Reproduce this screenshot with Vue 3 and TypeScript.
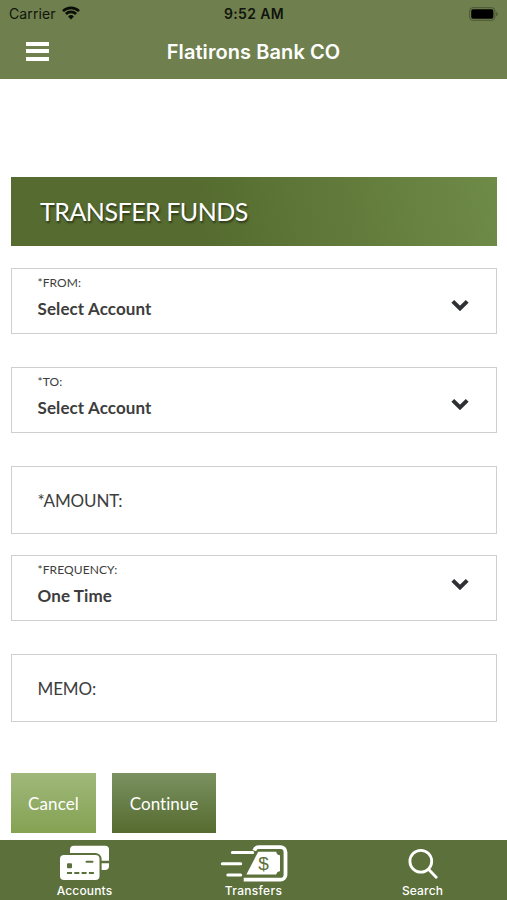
<script setup lang="ts">
interface Field {
  id: string
  label: string
  value?: string
}

const fields: Field[] = [
  { id: 'from', label: '*FROM:', value: 'Select Account' },
  { id: 'to', label: '*TO:', value: 'Select Account' },
  { id: 'amount', label: '*AMOUNT:' },
  { id: 'frequency', label: '*FREQUENCY:', value: 'One Time' },
  { id: 'memo', label: 'MEMO:' },
]
</script>

<template>
  <div class="screen">
    <header class="top">
      <div class="status">
        <div class="carrier">
          <span>Carrier</span>
          <svg class="wifi" viewBox="0 0 18 14" width="18" height="14">
            <path d="M1 5.1a11.4 11.4 0 0 1 16 0" />
            <path d="M3.9 8a7.3 7.3 0 0 1 10.2 0" />
            <path class="dot" d="M9 13.4 6.1 10.4a4.2 4.2 0 0 1 5.8 0Z" />
          </svg>
        </div>
        <span class="clock">9:52 AM</span>
        <svg class="battery" viewBox="0 0 30 14" width="30" height="14">
          <rect class="shell" x=".7" y=".7" width="25.2" height="12.6" rx="3.2" />
          <rect class="charge" x="2.2" y="2.2" width="22.2" height="9.6" rx="1.8" />
          <path class="cap" d="M27.2 4.7c2 .6 2 4 0 4.6Z" />
        </svg>
      </div>
      <div class="nav">
        <button class="menu" aria-label="Menu"><i></i><i></i><i></i></button>
        <div class="bank">Flatirons Bank CO</div>
      </div>
    </header>

    <main class="content">
      <h1 class="heading"><span>TRANSFER FUNDS</span></h1>
      <div v-for="f in fields" :key="f.id" class="field" :class="[f.id, { select: f.value }]">
        <div class="texts">
          <span class="label">{{ f.label }}</span>
          <span v-if="f.value" class="value">{{ f.value }}</span>
        </div>
        <svg v-if="f.value" class="chevron" viewBox="0 0 18 12" width="18" height="12">
          <path d="M1.8 2.300 9 9.400 16.2 2.300" />
        </svg>
      </div>
      <div class="actions">
        <button class="btn cancel">Cancel</button>
        <button class="btn continue">Continue</button>
      </div>
    </main>

    <nav class="tabs">
      <a class="tab">
        <svg viewBox="0.5 0 50 36" width="50" height="36">
          <path class="fill" d="M10.500 4.700a4 4 0 0 1 4-4h31a4 4 0 0 1 4 4v11h-7.400v-1.500A6.200 6.200 0 0 0 35.900 8H10.500Z" />
          <path class="fill" d="M42.100 18.300h7.400V21a4 4 0 0 1-4 4h-3.400Z" />
          <rect class="fill" x=".5" y="10" width="39.500" height="25" rx="4" />
          <rect class="hole" x="7.500" y="18.200" width="5" height="5" rx="1" />
          <path class="detail" d="M27 16.700h6" />
          <path class="dash" d="M7.500 28h27" />
        </svg>
        <span class="accounts">Accounts</span>
      </a>
      <a class="tab">
        <svg class="money" viewBox="0.5 0 68 38" width="68" height="38">
          <path class="line" d="M12.800 7.600h20.400M2.800 18.800h18.400M8.300 29.900h12.900" />
          <path class="frame" d="M34.800 5.600c.8-2.300 1.600-3.400 4.200-3.400h22a5 5 0 0 1 5 5v22.500a5 5 0 0 1-5 5H24.200" />
          <path class="fill" d="M38.700 6.700h18.100c.2 2.200 1.500 3.400 3.700 3.600v15.900c-2.200.2-3.500 1.400-3.700 3.300H26.900Z" />
          <text class="dollar" x="44" y="25" text-anchor="middle">$</text>
        </svg>
        <span class="transfers">Transfers</span>
      </a>
      <a class="tab">
        <svg class="search" viewBox="0 0 30 32" width="30" height="32">
          <circle cx="12.800" cy="12.300" r="10.900" />
          <path d="m20.700 20.500 7.500 7.800" />
        </svg>
        <span class="find">Search</span>
      </a>
    </nav>
  </div>
</template>

<style>
body {
  margin: 0;
  background: #fff;
}
</style>

<style scoped>
* {
  box-sizing: border-box;
}
.screen {
  width: 507px;
  height: 900px;
  display: flex;
  flex-direction: column;
  overflow: hidden;
  background: #fff;
  font-family: Lato, sans-serif;
  font-variant-ligatures: none;
}
button {
  border: 0;
  padding: 0;
  font: inherit;
}
.top {
  height: 79px;
  flex: none;
  background: #6f804e;
  font-family: Inter, sans-serif;
}
.status {
  height: 27px;
  padding: 0 8px 0 9px;
  display: grid;
  grid-template-columns: 1fr auto 1fr;
  align-items: center;
  color: #11140c;
  font-size: 14px;
}
.carrier {
  display: flex;
  align-items: center;
  gap: 6px;
  letter-spacing: .1px;
}
.wifi {
  margin-top: -2px;
  fill: none;
  stroke: #0b0e07;
  stroke-width: 2.700;
}
.wifi .dot {
  fill: #0b0e07;
  stroke: none;
}
.clock {
  font-weight: 600;
  letter-spacing: .35px;
}
.battery {
  justify-self: end;
}
.shell {
  fill: none;
  stroke: #4b5636;
  stroke-width: 1;
}
.charge {
  fill: #000;
}
.cap {
  fill: #4b5636;
}
.nav {
  height: 50px;
  display: grid;
  grid-template-columns: 76px 1fr 76px;
  align-items: center;
}
.menu {
  width: 23px;
  margin: -2px 0 0 26px;
  display: grid;
  gap: 3.500px;
  background: none;
}
.menu i {
  height: 4px;
  background: #fff;
}
.bank {
  color: #fff;
  text-align: center;
  font-size: 20px;
  font-weight: 600;
  letter-spacing: .08px;
}
.content {
  flex: 1;
  padding: 98px 10px 0 11px;
}
.heading {
  height: 69px;
  margin: 0 0 22px;
  padding: 0 0 1px 29px;
  display: flex;
  align-items: center;
  background: linear-gradient(80deg, #556b2f 0%, #556b2f 38%, #6f8b48 100%);
  color: #fff;
  font-size: 25px;
  font-weight: 400;
  letter-spacing: -.5px;
  text-shadow: 1px 2px 2px rgba(0, 0, 0, .5);
}
.field {
  height: 68px;
  padding: 2px 27px 0 25.500px;
  display: flex;
  align-items: center;
  justify-content: space-between;
  border: 1px solid #cfcfcf;
  color: #3d3d3d;
}
.field.select {
  height: 66px;
  margin-bottom: 33px;
  padding-top: 0;
  align-items: flex-start;
}
.field.amount {
  margin-bottom: 21px;
}
.texts {
  display: flex;
  flex-direction: column;
}
.label {
  font-size: 17px;
  line-height: 22px;
  letter-spacing: -.15px;
}
.select .label {
  margin-top: 6px;
  font-size: 12px;
  line-height: 16px;
  letter-spacing: .1px;
}
.value {
  margin-top: 7px;
  font-size: 17px;
  line-height: 22px;
  font-weight: 700;
  letter-spacing: .1px;
}
.chevron {
  margin-top: 30px;
  fill: none;
  stroke: #2e3033;
  stroke-width: 4;
}
.frequency .chevron {
  margin-top: 22px;
}
.actions {
  margin-top: 51px;
  display: flex;
  gap: 16px;
}
.btn {
  height: 60px;
  color: #fff;
  font-size: 17px;
}
.cancel {
  width: 85px;
  background: linear-gradient(#a0b87b, #84a252);
  letter-spacing: .1px;
}
.continue {
  width: 104px;
  background: linear-gradient(#7b9161, #556b2f);
}
.tabs {
  height: 60px;
  flex: none;
  display: grid;
  grid-template-columns: repeat(3, 1fr);
  background: #5b703a;
}
.tab {
  display: flex;
  flex-direction: column;
  align-items: center;
  padding-top: 5px;
  color: #fff;
  font: 500 12px/14px Inter, sans-serif;
  letter-spacing: .15px;
}
.tab span {
  margin-top: auto;
  padding-bottom: 2px;
}
.fill {
  fill: #fff;
}
.hole {
  fill: #5b703a;
}
.detail,
.dash {
  fill: none;
  stroke: #5b703a;
  stroke-width: 2;
}
.detail {
  stroke-linecap: round;
}
.dash {
  stroke-width: 1.800;
  stroke-dasharray: 5 2.300;
}
.line {
  fill: none;
  stroke: #fff;
  stroke-width: 3;
  stroke-linecap: round;
}
.frame {
  fill: none;
  stroke: #fff;
  stroke-width: 3.800;
}
.dollar {
  fill: #5b703a;
  font: 400 19px "Liberation Sans", sans-serif;
  letter-spacing: 0;
}
.transfers {
  letter-spacing: .3px;
}
.search {
  margin-top: 4px;
  fill: none;
  stroke: #fff;
  stroke-width: 2.800;
  stroke-linecap: round;
}
</style>
